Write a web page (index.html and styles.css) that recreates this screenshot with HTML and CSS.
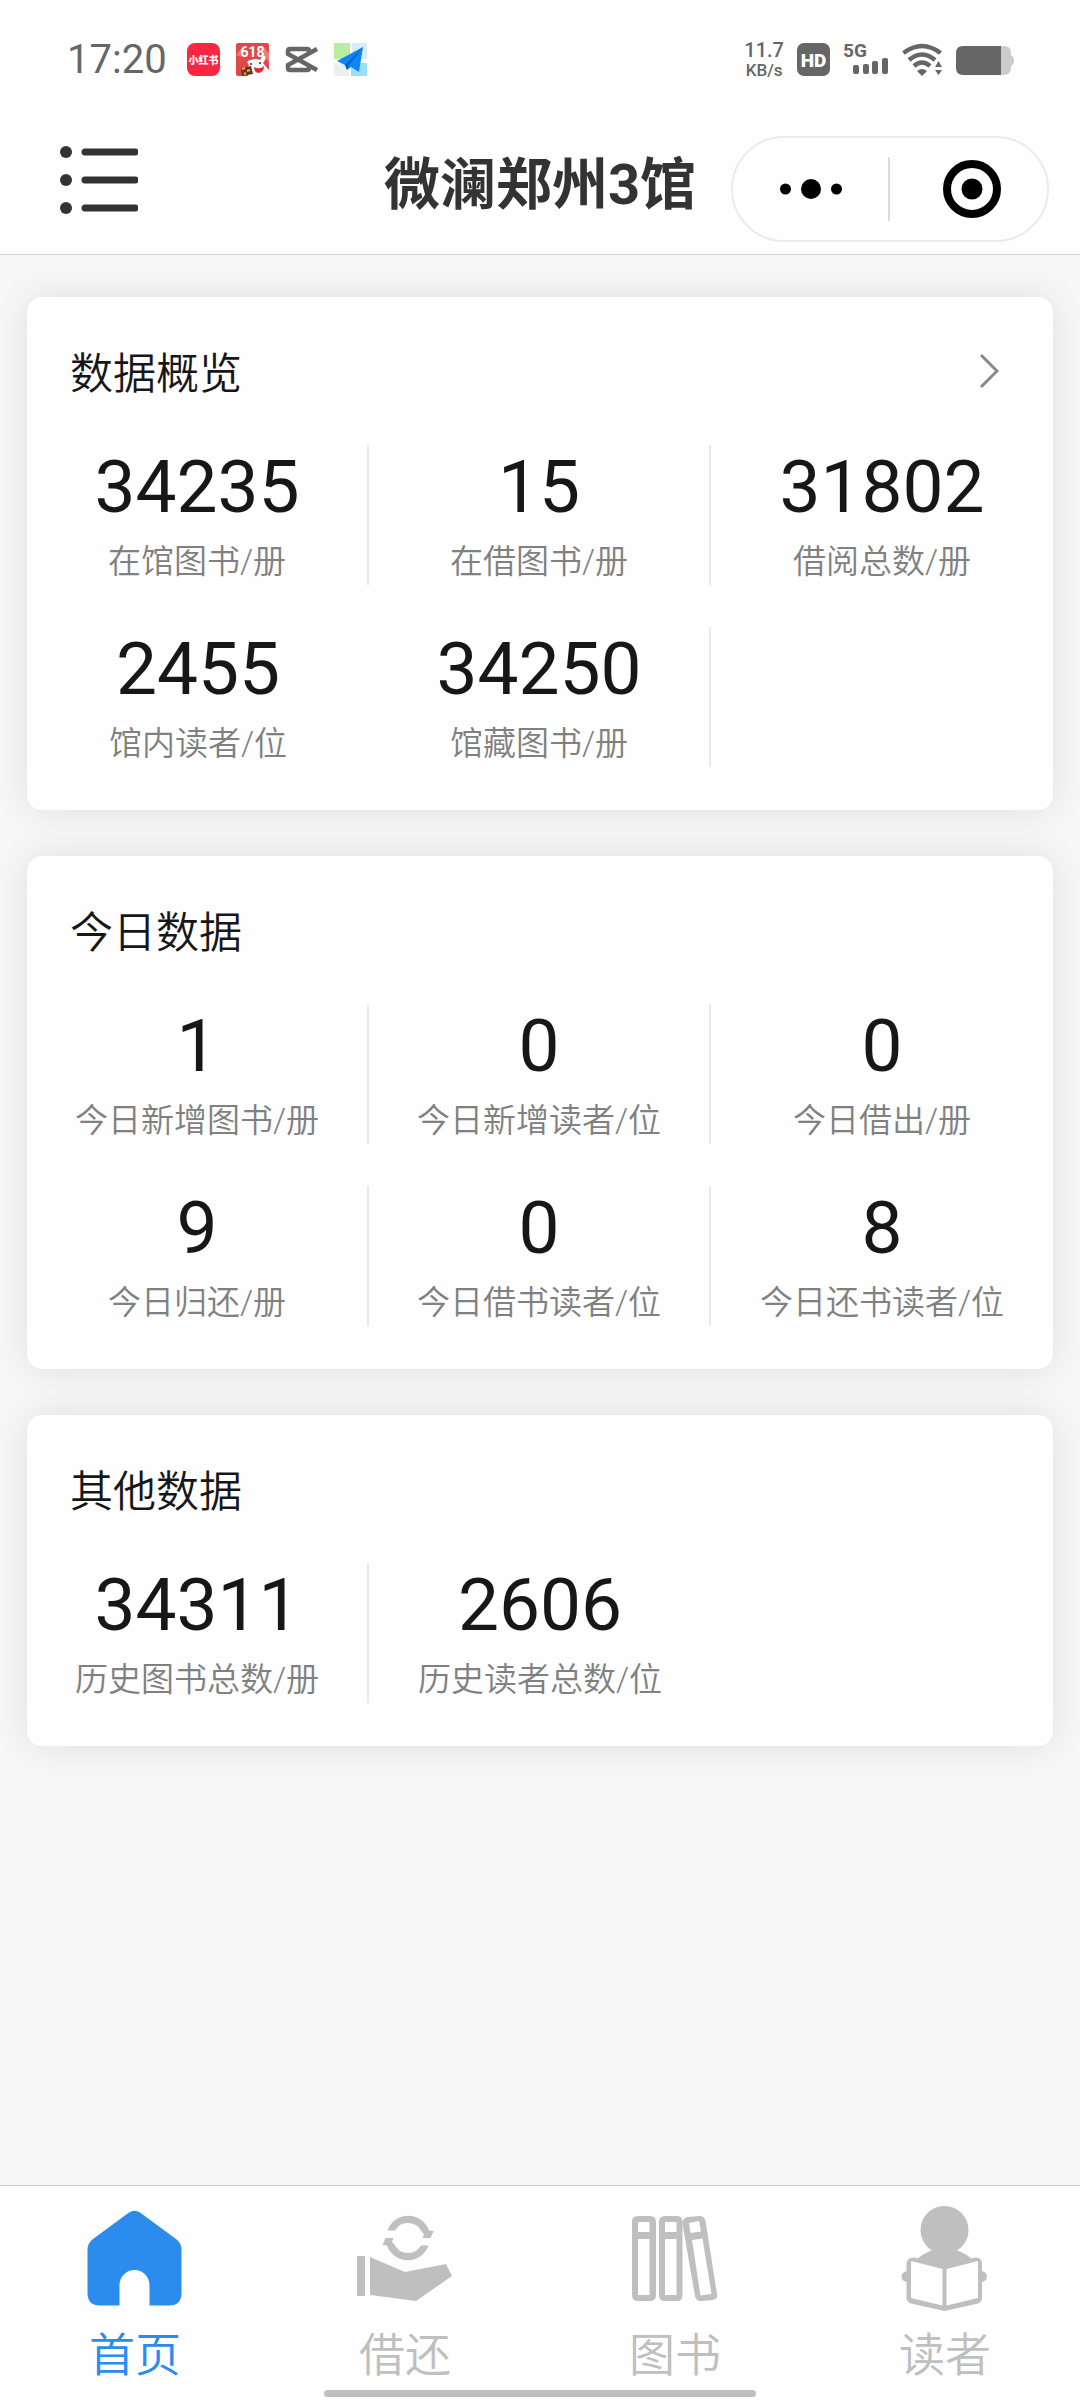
FILE: index.html
```html
<!DOCTYPE html>
<html lang="zh-CN">
<head>
<meta charset="utf-8">
<meta name="viewport" content="width=device-width">
<title>微澜郑州3馆</title>
<link rel="stylesheet" href="styles.css">
</head>
<body>
<div class="status-bar">
  <span class="clock">17:20</span>
  <div class="notifications">
    <svg width="33" height="33" viewBox="0 0 33 33" aria-hidden="true">
      <rect width="33" height="33" rx="8" fill="#fb2742"/>
      <text x="16.5" y="20.5" text-anchor="middle" class="glyph-xhs">小红书</text>
    </svg>
    <svg width="33" height="33" viewBox="0 0 33 33" aria-hidden="true">
      <rect width="33" height="33" rx="2" fill="#e0474a"/>
      <path d="M0 12L8 2L5 14ZM26 2L33 10V20L28 12Z" fill="#f07a72"/>
      <path d="M12 33Q10 26 13 22Q9 18 15 17Q20 15 24 17Q27 11 29 13Q31 16 27 20Q31 25 33 27V33Z" fill="#fff"/>
      <path d="M18 24Q24 27 28 23Q28 30 22 30Q18 29 18 24Z" fill="#d92d36"/>
      <circle cx="15" cy="21" r="1" fill="#222"/><circle cx="24" cy="20" r="1" fill="#222"/>
      <path d="M5 25L15 23L17 31L6 33Z" fill="#6a321a"/>
      <path d="M6 26L9 25M11 28L14 27M8 31L10 30" stroke="#f0b33f" stroke-width="2"/>
      <text x="16.5" y="14" text-anchor="middle" class="glyph-618">618</text>
    </svg>
    <svg width="33" height="33" viewBox="0 0 33 33" aria-hidden="true">
      <path d="M24 10V8Q24 6 22 6H5Q3 6 3 8V11L32 27M24 23V25Q24 27 22 27H5Q3 27 3 25V22L32 6" fill="none" stroke="#666" stroke-width="4.5"/>
    </svg>
    <svg width="33" height="33" viewBox="0 0 33 33" aria-hidden="true">
      <path d="M0 0H16V16H0Z" fill="#b5ef9c"/><path d="M18 0H33V16H18Z" fill="#d6edf5"/>
      <path d="M0 20H15V33H0Z" fill="#edf0f0"/><path d="M17 20H33V33H17Z" fill="#98dffb"/>
      <path d="M29 4L3 18L11 22L13 27L17 24L25 29Z" fill="#1083f5"/>
      <path d="M29 4L11 22L13 27L15 22Z" fill="#0760c8"/>
    </svg>
  </div>
  <div class="system">
    <div class="speed"><span class="rate">11.7</span><span class="unit">KB/s</span></div>
    <svg width="33" height="33" viewBox="0 0 33 33" aria-hidden="true">
      <rect width="33" height="33" rx="7" fill="#666"/>
      <text x="16.5" y="23.5" text-anchor="middle" class="glyph-hd">HD</text>
    </svg>
    <svg width="46" height="45" viewBox="0 -6 46 45" aria-hidden="true">
      <text x="0" y="14" class="glyph-5g">5G</text>
      <g fill="#666"><rect x="10" y="22" width="6" height="9" rx="2"/><rect x="20" y="21" width="6" height="10" rx="2"/><rect x="29" y="18" width="6" height="13" rx="2"/><rect x="39" y="15" width="6" height="16" rx="2"/></g>
    </svg>
    <svg width="40" height="33" viewBox="0 0 40 33" aria-hidden="true">
      <g fill="none" stroke="#666" stroke-width="4.5"><path d="M1.5 10Q20 -4 38.5 10"/><path d="M7 17Q20 6 33 17"/><path d="M12 23Q20 16 28 23"/></g>
      <path d="M15 28Q20 24 25 28L20 33ZM33 24L36.5 18L40 24ZM33 27H40L36.5 32Z" fill="#666"/>
    </svg>
    <svg width="59" height="33" viewBox="0 0 59 33" aria-hidden="true">
      <path d="M46 3H49Q56 3 56 10V12Q59 13 59 18Q59 22 56 23V25Q56 32 49 32H46Z" fill="#ccc"/>
      <path d="M8 3H46V32H8Q1 32 1 25V10Q1 3 8 3Z" fill="#666"/>
    </svg>
  </div>
</div>

<header class="nav-bar">
  <button class="menu" type="button" aria-label="菜单">
    <svg width="78" height="70" viewBox="0 0 78 70" aria-hidden="true">
      <g fill="#333"><circle cx="6" cy="7" r="6"/><circle cx="6" cy="35" r="6"/><circle cx="6" cy="63" r="6"/></g>
      <path d="M25 7H75M25 35H75M25 63H75" stroke="#333" stroke-width="7" stroke-linecap="round"/>
    </svg>
  </button>
  <h1 class="page-title">微澜郑州3馆</h1>
  <div class="capsule">
    <button type="button" aria-label="更多">
      <svg width="64" height="64" viewBox="0 0 64 64" aria-hidden="true"><circle cx="6.5" cy="32" r="5.5"/><circle cx="32" cy="32" r="10"/><circle cx="57.5" cy="32" r="5.5"/></svg>
    </button>
    <button type="button" aria-label="关闭">
      <svg width="64" height="64" viewBox="0 0 64 64" aria-hidden="true"><circle cx="32" cy="32" r="25" fill="none" stroke="#000" stroke-width="8"/><circle cx="32" cy="32" r="10.5"/></svg>
    </button>
  </div>
</header>

<main class="content">
  <section class="card">
    <div class="card-head">
      <h2>数据概览</h2>
      <a href="#overview" class="more" aria-label="查看数据概览">
        <svg width="20" height="36" viewBox="0 0 20 36" aria-hidden="true"><path d="M2 2L18 18L2 34" fill="none" stroke="#888" stroke-width="3"/></svg>
      </a>
    </div>
    <dl class="stats">
      <div class="stat divided"><dd>34235</dd><dt>在馆图书/册</dt></div>
      <div class="stat divided"><dd>15</dd><dt>在借图书/册</dt></div>
      <div class="stat"><dd>31802</dd><dt>借阅总数/册</dt></div>
      <div class="stat"><dd>2455</dd><dt>馆内读者/位</dt></div>
      <div class="stat divided"><dd>34250</dd><dt>馆藏图书/册</dt></div>
    </dl>
  </section>

  <section class="card">
    <div class="card-head"><h2>今日数据</h2></div>
    <dl class="stats">
      <div class="stat divided"><dd>1</dd><dt>今日新增图书/册</dt></div>
      <div class="stat divided"><dd>0</dd><dt>今日新增读者/位</dt></div>
      <div class="stat"><dd>0</dd><dt>今日借出/册</dt></div>
      <div class="stat divided"><dd>9</dd><dt>今日归还/册</dt></div>
      <div class="stat divided"><dd>0</dd><dt>今日借书读者/位</dt></div>
      <div class="stat"><dd>8</dd><dt>今日还书读者/位</dt></div>
    </dl>
  </section>

  <section class="card">
    <div class="card-head"><h2>其他数据</h2></div>
    <dl class="stats">
      <div class="stat divided"><dd>34311</dd><dt>历史图书总数/册</dt></div>
      <div class="stat"><dd>2606</dd><dt>历史读者总数/位</dt></div>
    </dl>
  </section>
</main>

<nav class="tab-bar">
  <a href="#home" class="tab active" aria-current="page">
    <svg width="110" height="120" viewBox="0 0 110 120" aria-hidden="true"><path d="M49 12.5Q54.5 9 60 12.5L96 39Q101.5 43 101.5 50V93Q101.5 105.5 89 105.5H69.5V85A15 15 0 0 0 39.5 85V105.5H20Q7.5 105.5 7.5 93V50Q7.5 43 13 39Z"/></svg>
    <span>首页</span>
  </a>
  <a href="#borrow" class="tab">
    <svg width="110" height="120" viewBox="0 0 110 120" aria-hidden="true">
      <path d="M7 56H15V96H7ZM20 57L55 72L96 64L102 76L66 101L20 95Z"/>
      <path id="arc" d="M37.5 30.5A22 22 0 0 1 79 30.5L83.5 31L80.5 38H72.5L74 34L71.5 31.5A15 15 0 0 0 45 30.5Z"/>
      <use href="#arc" transform="rotate(180 58 38)"/>
    </svg>
    <span>借还</span>
  </a>
  <a href="#books" class="tab">
    <svg width="110" height="120" viewBox="0 0 110 120" aria-hidden="true">
      <path fill-rule="evenodd" d="M18 16H30Q36 16 36 22V95Q36 101 30 101H18Q12 101 12 95V22Q12 16 18 16ZM18 22V32H29.5V22ZM18 39V95H29.5V39Z"/>
      <path fill-rule="evenodd" d="M45 16H57Q62.5 16 62.5 22V95Q62.5 101 57 101H45Q39 101 39 95V22Q39 16 45 16ZM45 22V32H56.5V22ZM45 39V95H56.5V39Z"/>
      <path fill-rule="evenodd" d="M68 17L79 16Q84 15.5 85.5 21L97 94Q98 99 93 100L81 101Q76 101.5 75 96L62.5 24Q62 18 68 17ZM69 23L70.5 33L81 31.5L79 21ZM72 40L80.5 95.5L91.5 94L82.5 38.5Z"/>
    </svg>
    <span>图书</span>
  </a>
  <a href="#readers" class="tab">
    <svg width="110" height="120" viewBox="0 0 110 120" aria-hidden="true">
      <circle cx="54.5" cy="30" r="24"/>
      <path d="M43 50Q34 53 27 59L54.5 68L82 59Q75 53 66 50Z"/>
      <path d="M17 71Q11.500 72 11.500 76.500Q11.500 81 17 82ZM91.500 71Q97 72 97 76.500Q97 81 91.500 82Z"/>
      <path fill-rule="evenodd" d="M24 57.5L54.5 66.5L85 57.5Q92 57 92 64V97Q92 102 88 103.5L54.5 111L21 103.5Q16.5 102 16.5 97V64Q17 57 24 57.5ZM21 61V98L52.5 105.500V69ZM56.5 69V105.5L88 98V61Z"/>
    </svg>
    <span>读者</span>
  </a>
  <div class="home-indicator"></div>
</nav>
</body>
</html>
```
FILE: styles.css
```css
* {
  box-sizing: border-box;
}

body {
  margin: 0;
  min-height: 100vh;
  display: flex;
  flex-direction: column;
  background: #f7f7f7;
  color: #171717;
  font-family: Roboto, "Noto Sans CJK SC", sans-serif;
}

svg {
  display: block;
  flex: none;
}

button {
  padding: 0;
  border: 0;
  background: none;
}

a {
  color: inherit;
  text-decoration: none;
}

/* Status bar */
.status-bar {
  display: flex;
  align-items: center;
  height: 110px;
  padding: 9px 66px 0 67px;
  background: #fefefe;
  color: #666;
}

.status-bar,
.nav-bar,
.tab-bar {
  flex: none;
}

.clock {
  font-size: 40px;
  line-height: 40px;
}

.notifications {
  display: flex;
  gap: 16px;
  margin-left: 20px;
}

.system {
  display: flex;
  align-items: center;
  gap: 13px;
  margin-left: auto;
}

.speed {
  display: flex;
  flex-direction: column;
  align-items: center;
  font-weight: 500;
  line-height: 20px;
}

.rate {
  font-size: 20px;
}

.unit {
  font-size: 17px;
}

.glyph-xhs {
  fill: #fff;
  font-size: 10px;
  font-weight: 900;
}

.glyph-618 {
  fill: #fff;
  font-size: 14px;
  font-weight: 700;
}

.glyph-hd {
  fill: #fff;
  font-size: 19px;
  font-weight: 900;
}

.glyph-5g {
  fill: #666;
  font-size: 19px;
  font-weight: 700;
}

/* Navigation bar */
.nav-bar {
  display: grid;
  grid-template-columns: 1fr auto 1fr;
  align-items: start;
  height: 145px;
  padding: 26px 31px 0;
  border-bottom: 1px solid #d4d4d4;
  background: #fefefe;
}

.menu {
  justify-self: start;
  padding: 9px 0 9px 29px;
}

.page-title {
  margin: 0;
  color: #333;
  font-size: 56px;
  line-height: 98px;
  font-weight: 700;
}

.capsule {
  display: grid;
  grid-template-columns: 1fr 1fr;
  align-items: center;
  justify-self: end;
  width: 318px;
  height: 106px;
  border: 2px solid #ebebeb;
  border-radius: 53px;
}

.capsule button {
  display: flex;
  justify-content: center;
}

.capsule button:first-child {
  border-right: 2px solid #ddd;
}

.capsule button:last-child {
  padding-left: 6px;
}

/* Cards */
.content {
  flex: 1;
  display: flex;
  flex-direction: column;
  gap: 46px;
  padding: 42px 27px;
}

.card {
  padding-bottom: 43px;
  border-radius: 15px;
  background: #fefefe;
  box-shadow: 0 0 36px rgba(0, 0, 0, 0.1);
}

.card-head {
  display: flex;
  align-items: center;
  justify-content: space-between;
  height: 148px;
  padding: 0 54px 0 43px;
}

.card-head h2 {
  margin: 0;
  padding-top: 5px;
  font-size: 43px;
  line-height: 60px;
  font-weight: 350;
}

.stats {
  display: grid;
  grid-template-columns: repeat(3, 1fr);
  row-gap: 42px;
  margin: 0;
}

.stat {
  display: flex;
  flex-direction: column;
  align-items: center;
  height: 140px;
}

.divided {
  border-right: 2px solid #eaeaea;
}

.stat dd {
  margin: 0;
  font-size: 73px;
  line-height: 84px;
}

.stat dt {
  margin-top: 10px;
  color: #808080;
  font-size: 33px;
  font-weight: 350;
  line-height: 46px;
}

/* Tab bar */
.tab-bar {
  position: relative;
  display: grid;
  grid-template-columns: repeat(4, 1fr);
  height: 215px;
  padding-top: 14px;
  border-top: 1px solid #ccc;
  background: #fefefe;
}

.tab {
  display: flex;
  flex-direction: column;
  align-items: center;
  color: #bfbfbf;
  font-size: 46px;
  font-weight: 350;
  line-height: 70px;
}

.tab svg {
  fill: currentColor;
}

.active {
  color: #2b8cee;
}

.home-indicator {
  position: absolute;
  bottom: 3px;
  left: 30%;
  width: 40%;
  height: 7px;
  border-radius: 4px;
  background: #bfbfbf;
}
```
